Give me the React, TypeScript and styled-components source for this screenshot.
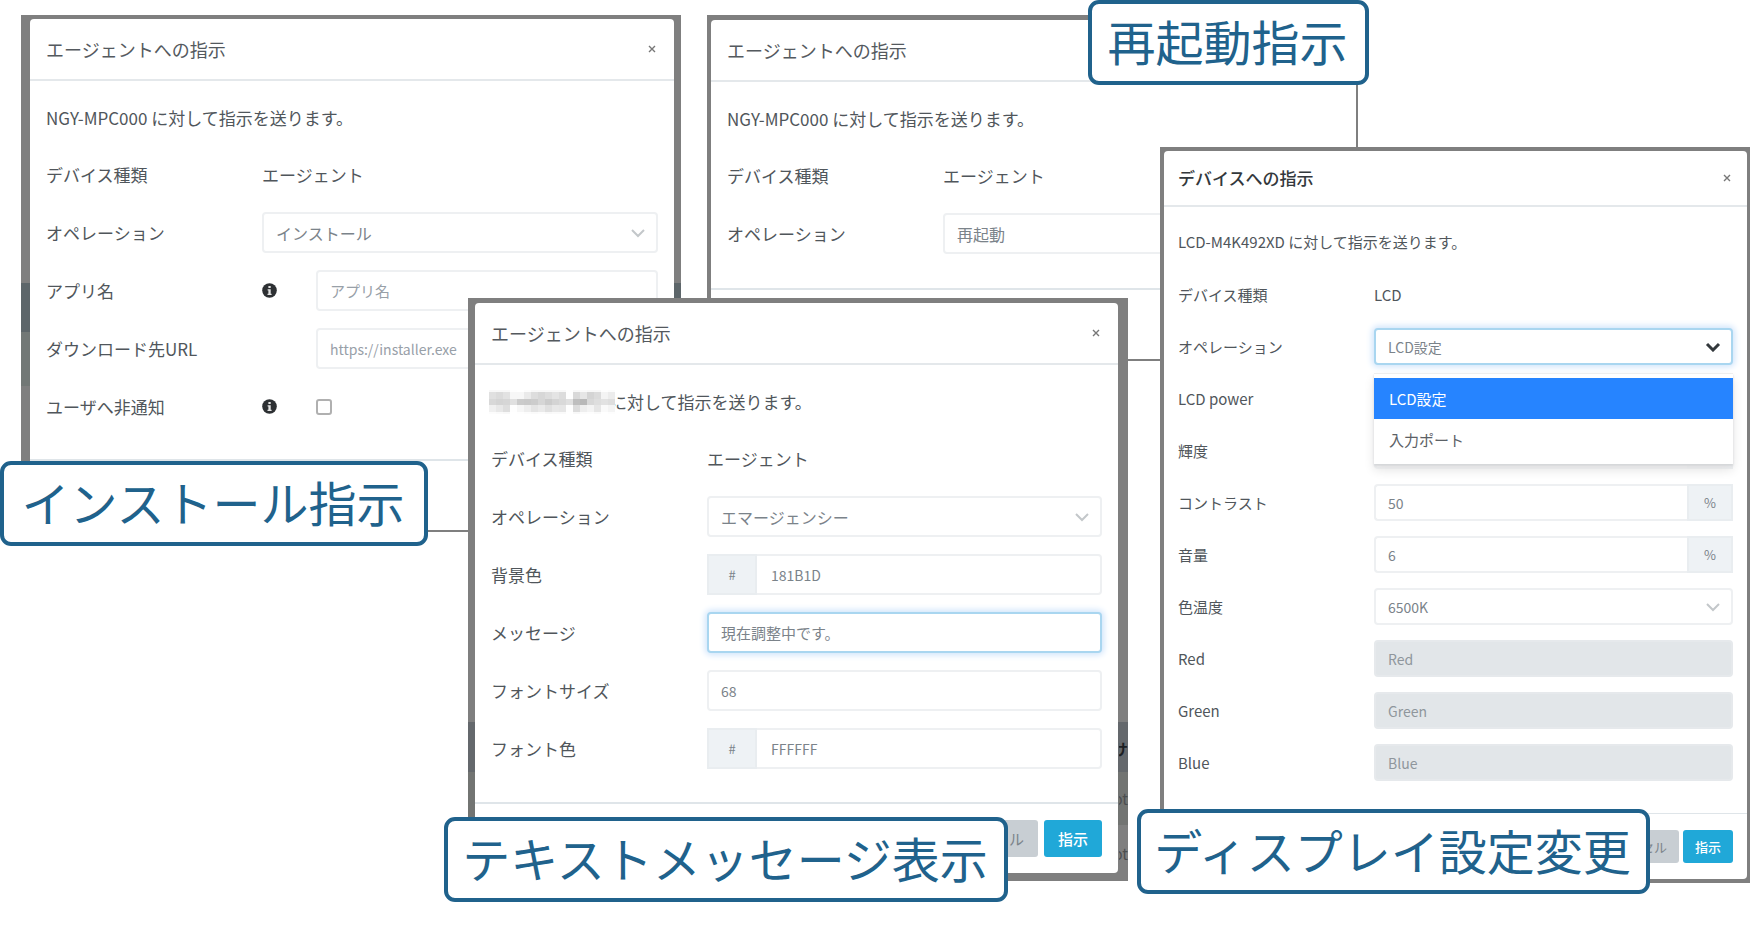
import React, { useId } from "react";
import styled, { createGlobalStyle, css } from "styled-components";

const GlobalStyle = createGlobalStyle`
  *, *::before, *::after { box-sizing: border-box; }
  body {
    margin: 0;
    background: #fff;
    color: #50565b;
    font-family: "Noto Sans CJK JP", "Noto Sans", sans-serif;
  }
  button, input, select { font-family: inherit; }
`;

/* Horizontal places on the board are shares of its 1750 unit wide design grid. */
const share = (units: number) => `calc(100% * ${units} / 1750)`;

type Size = "normal" | "small";

const Board = styled.main`
  position: relative;
  min-width: 1400px;
  min-height: 100vh;
  overflow: hidden;
`;

const Frame = styled.section<{
  $x: number;
  $y: number;
  $w: number;
  $edges: string;
  $backdrop?: string;
}>`
  position: absolute;
  left: ${(p) => share(p.$x)};
  top: ${(p) => p.$y}px;
  width: ${(p) => share(p.$w)};
  padding: ${(p) => p.$edges};
  background: ${(p) => p.$backdrop ?? "#7f7f7f"};
`;

const Dialog = styled.div`
  background: #fff;
  border-radius: 4px;
`;

const Header = styled.header<{ $size: Size }>`
  display: flex;
  align-items: center;
  justify-content: space-between;
  height: ${(p) => (p.$size === "small" ? 56 : 62)}px;
  padding: 0 ${(p) => (p.$size === "small" ? 14 : 16)}px;
  border-bottom: 2px solid #e4e8eb;
`;

const Title = styled.h2<{ $strong?: boolean }>`
  margin: 0;
  font-size: ${(p) => (p.$strong ? 17 : 18)}px;
  font-weight: ${(p) => (p.$strong ? 500 : 400)};
  color: ${(p) => (p.$strong ? "#33383c" : "#54595e")};
  line-height: 24px;
`;

const Close = styled.button`
  display: flex;
  padding: 2px;
  border: 0;
  background: none;
  color: #777;
`;

const Body = styled.div<{ $size: Size; $bottom: number }>`
  display: flex;
  flex-direction: column;
  gap: ${(p) => (p.$size === "small" ? 15 : 17)}px;
  padding: ${(p) => (p.$size === "small" ? "23px 14px" : "25px 16px")};
  padding-bottom: ${(p) => p.$bottom}px;
  font-size: ${(p) => (p.$size === "small" ? 15 : 17)}px;
  --label: ${(p) => (p.$size === "small" ? 196 : 216)}px;
  --control: ${(p) => (p.$size === "small" ? 37 : 41)}px;
`;

const Intro = styled.p`
  display: flex;
  align-items: center;
  margin: 0 0 7px;
  line-height: 24px;
`;

const Row = styled.div`
  display: grid;
  grid-template-columns: var(--label) 1fr;
  align-items: center;
  height: var(--control);
`;

const HintedControl = styled.div`
  display: grid;
  grid-template-columns: 54px 1fr;
  align-items: center;
`;

const field = css`
  width: 100%;
  min-width: 0;
  height: var(--control);
  padding: 0 12px;
  border: 2px solid #eef0f2;
  border-radius: 4px;
  background: #fff;
  color: #7b838a;
  outline: none;
  &::placeholder { color: #98a0a8; opacity: 1; }
`;

const focusRing = css`
  border-color: #a9d6f0;
  box-shadow: 0 0 6px 2px #cfe4fb;
`;

const Input = styled.input<{ $active?: boolean; $text?: number }>`
  ${field}
  font-size: ${(p) => p.$text ?? 14}px;
  ${(p) => p.$active && focusRing}
  &:disabled {
    background: #e2e6e9;
    border-color: #e6e9ec;
  }
  &:disabled::placeholder { color: #8f969c; }
`;

const Group = styled.div`
  display: flex;
  ${Input} { flex: 1; }
  ${Input}:first-child { border-radius: 4px 0 0 4px; border-right: 0; }
  ${Input}:last-child { border-radius: 0 4px 4px 0; border-left: 0; padding-left: 14px; }
`;

const Addon = styled.span<{ $width: number }>`
  display: flex;
  align-items: center;
  justify-content: center;
  width: ${(p) => p.$width}px;
  height: var(--control);
  border: 2px solid #e9edf0;
  background: #eef2f5;
  color: #7b838a;
  font-size: 13px;
`;

const SelectBox = styled.div`
  position: relative;
`;

const NativeSelect = styled.select<{ $active?: boolean; $text: number }>`
  ${field}
  appearance: none;
  font-size: ${(p) => p.$text}px;
  ${(p) => p.$active && focusRing}
`;

const Arrow = styled.svg<{ $active?: boolean }>`
  position: absolute;
  right: 12px;
  top: 50%;
  width: 16px;
  height: 10px;
  margin-top: -5px;
  fill: none;
  stroke: ${(p) => (p.$active ? "#33383c" : "#c3c7ca")};
  stroke-width: ${(p) => (p.$active ? 3 : 2)};
  pointer-events: none;
`;

const Menu = styled.ul`
  position: absolute;
  z-index: 1;
  top: 100%;
  left: 0;
  right: 0;
  margin: 8px 0 0;
  padding: 4px 0;
  list-style: none;
  background: #fff;
  border-top: 1px solid #eee;
  box-shadow: 0 2px 2px #d5d7d9, 0 6px 10px #e4e4e4;
`;

const Option = styled.li<{ $selected?: boolean }>`
  padding: 0 15px;
  font-size: 15px;
  line-height: 41px;
  background: ${(p) => (p.$selected ? "#2684ff" : "#fff")};
  color: ${(p) => (p.$selected ? "#fff" : "#5c6166")};
`;

const Checkbox = styled.input`
  appearance: none;
  width: 16px;
  height: 16px;
  margin: 0;
  border: 2px solid #b0b0b0;
  border-radius: 3px;
  background: #fff;
`;

const Footer = styled.footer<{ $size: Size }>`
  display: flex;
  justify-content: flex-end;
  gap: ${(p) => (p.$size === "small" ? 4 : 6)}px;
  min-height: ${(p) => (p.$size === "small" ? 66 : 71)}px;
  padding: 16px ${(p) => (p.$size === "small" ? 14 : 16)}px;
  border-top: ${(p) => (p.$size === "small" ? 1 : 2)}px solid #dfe5e9;
`;

const Button = styled.button<{ $primary?: boolean; $size: Size }>`
  height: ${(p) => (p.$size === "small" ? 33 : 37)}px;
  padding: 0 ${(p) => (p.$size === "small" ? 12 : 14)}px;
  border: 0;
  border-radius: 3px;
  font-size: ${(p) => (p.$size === "small" ? 13 : 15)}px;
  font-weight: ${(p) => (p.$primary ? 500 : 400)};
  background: ${(p) => (p.$primary ? "#20a8d8" : "#c8ced3")};
  color: ${(p) => (p.$primary ? "#fff" : "#7b838a")};
`;

const Caption = styled.div<{ $x: number; $y: number; $w: number }>`
  position: absolute;
  left: ${(p) => share(p.$x)};
  top: ${(p) => p.$y}px;
  min-width: ${(p) => share(p.$w)};
  padding: 1px 2px 5px 0;
  border: 4px solid #20628c;
  border-radius: 11px;
  background: #fff;
  color: #20628c;
  font-size: 48px;
  line-height: 71px;
  text-align: center;
  white-space: nowrap;
`;

const Behind = styled.span<{ $y: number; $strong?: boolean }>`
  position: absolute;
  right: 0;
  top: ${(p) => p.$y}px;
  width: 9px;
  overflow: hidden;
  display: flex;
  justify-content: flex-end;
  font-size: 15px;
  line-height: 20px;
  font-weight: ${(p) => (p.$strong ? 700 : 400)};
  color: ${(p) => (p.$strong ? "#1d2023" : "#4c4e50")};
`;

const MosaicImage = styled.svg`
  flex: none;
  margin: 0 -5px 0 -2px;
  z-index: 1;
`;

const InfoIcon = () => (
  <svg width="15" height="15" viewBox="0 0 15 15" role="img" aria-label="info">
    <circle cx="7.5" cy="7.5" r="7.3" fill="#2d3033" />
    <path d="M6.4 3h2.3v2H6.4zM5.6 6.2h3.1v4.5h.9V12H5.5v-1.3h.9V7.5h-.8z" fill="#e4e4e4" />
  </svg>
);

const CloseButton = () => (
  <Close type="button" aria-label="close">
    <svg width="8" height="8" viewBox="0 0 8 8" fill="none" stroke="currentColor" strokeWidth="1.4">
      <path d="M1 1l6 6M7 1L1 7" />
    </svg>
  </Close>
);

/* Grey levels of the pixelated device name: one list per band, one value per 7px cell. */
const mosaicBands = [
  { y: 0, height: 2, tones: [248, 248, 248, 254, 255, 252, 248, 248, 248, 248, 248, 254, 248, 250, 248, 248, 254, 252] },
  { y: 2, height: 7, tones: [224, 219, 226, 247, 247, 234, 221, 215, 221, 228, 220, 254, 217, 230, 212, 219, 244, 236] },
  { y: 9, height: 6, tones: [216, 212, 214, 224, 203, 201, 204, 214, 204, 212, 217, 224, 190, 184, 216, 222, 226, 222] },
  { y: 15, height: 7, tones: [240, 232, 222, 254, 246, 238, 228, 234, 224, 232, 230, 254, 220, 238, 244, 230, 250, 244] },
  { y: 22, height: 2, tones: [252, 250, 248, 255, 254, 252, 250, 252, 248, 250, 250, 255, 248, 252, 253, 250, 255, 253] },
];

const Mosaic = () => (
  <MosaicImage width="126" height="24" viewBox="0 0 126 24" shapeRendering="crispEdges" aria-hidden="true">
    {mosaicBands.map((band) =>
      band.tones.map((tone, i) => (
        <rect
          key={`${band.y}-${i}`}
          x={i * 7}
          y={band.y}
          width="7"
          height={band.height}
          fill={`rgb(${tone},${tone},${tone})`}
        />
      )),
    )}
  </MosaicImage>
);

interface FieldProps {
  label: string;
  children: (id: string) => React.ReactNode;
}

const Field = ({ label, children }: FieldProps) => {
  const id = useId();
  return (
    <Row>
      <label htmlFor={id}>{label}</label>
      {children(id)}
    </Row>
  );
};

const Info = ({ label, value }: { label: string; value: string }) => (
  <Row>
    <span>{label}</span>
    <span>{value}</span>
  </Row>
);

interface SelectProps {
  id: string;
  value: string;
  text?: number;
  active?: boolean;
  children?: React.ReactNode;
}

const Select = ({ id, value, text = 16, active, children }: SelectProps) => (
  <SelectBox>
    <NativeSelect id={id} $text={text} $active={active} defaultValue={value}>
      <option>{value}</option>
    </NativeSelect>
    <Arrow viewBox="0 0 16 10" $active={active}>
      <path d="M2 2l6 6 6-6" />
    </Arrow>
    {children}
  </SelectBox>
);

const HexInput = ({ id, value }: { id: string; value: string }) => (
  <Group>
    <Addon $width={50}>#</Addon>
    <Input id={id} defaultValue={value} />
  </Group>
);

const PercentInput = ({ id, value }: { id: string; value?: string }) => (
  <Group>
    <Input id={id} defaultValue={value} />
    <Addon $width={46}>%</Addon>
  </Group>
);

const Actions = ({ size }: { size: Size }) => (
  <Footer $size={size}>
    <Button type="button" $size={size}>キャンセル</Button>
    <Button type="button" $size={size} $primary>指示</Button>
  </Footer>
);

const installBackdrop =
  "linear-gradient(#7f7f7f 268px, #5d666a 268px 317px, #727876 317px 371px, #7f7f7f 371px)";
const messageBackdrop =
  "linear-gradient(#7f7f7f 424px, #64686c 424px 474px, #727472 474px 527px, #7f7f7f 527px)";

export default function App() {
  return (
    <>
      <GlobalStyle />
      <Board>
        <Frame $x={21} $y={15} $w={660} $edges="4px 7px 2px 9px" $backdrop={installBackdrop}>
          <Dialog>
            <Header $size="normal">
              <Title>エージェントへの指示</Title>
              <CloseButton />
            </Header>
            <Body $size="normal" $bottom={32}>
              <Intro>NGY-MPC000 に対して指示を送ります。</Intro>
              <Info label="デバイス種類" value="エージェント" />
              <Field label="オペレーション">{(id) => <Select id={id} value="インストール" />}</Field>
              <Field label="アプリ名">
                {(id) => (
                  <HintedControl>
                    <InfoIcon />
                    <Input id={id} $text={15} placeholder="アプリ名" />
                  </HintedControl>
                )}
              </Field>
              <Field label="ダウンロード先URL">
                {(id) => (
                  <HintedControl>
                    <span />
                    <Input id={id} placeholder="https://installer.exe" />
                  </HintedControl>
                )}
              </Field>
              <Field label="ユーザへ非通知">
                {(id) => (
                  <HintedControl>
                    <InfoIcon />
                    <Checkbox id={id} type="checkbox" />
                  </HintedControl>
                )}
              </Field>
            </Body>
            <Footer $size="normal" />
          </Dialog>
        </Frame>

        <Frame $x={707} $y={15} $w={651} $edges="5px 2px 2px 4px">
          <Dialog>
            <Header $size="normal">
              <Title>エージェントへの指示</Title>
            </Header>
            <Body $size="normal" $bottom={34}>
              <Intro>NGY-MPC000 に対して指示を送ります。</Intro>
              <Info label="デバイス種類" value="エージェント" />
              <Field label="オペレーション">{(id) => <Select id={id} value="再起動" />}</Field>
            </Body>
            <Footer $size="normal" />
          </Dialog>
        </Frame>

        <Frame $x={468} $y={298} $w={660} $edges="5px 10px 8px 7px" $backdrop={messageBackdrop}>
          <Behind $y={441} $strong>サ</Behind>
          <Behind $y={491}>ot</Behind>
          <Behind $y={546}>ot</Behind>
          <Dialog>
            <Header $size="normal">
              <Title>エージェントへの指示</Title>
              <CloseButton />
            </Header>
            <Body $size="normal" $bottom={33}>
              <Intro>
                <Mosaic />
                に対して指示を送ります。
              </Intro>
              <Info label="デバイス種類" value="エージェント" />
              <Field label="オペレーション">{(id) => <Select id={id} value="エマージェンシー" />}</Field>
              <Field label="背景色">{(id) => <HexInput id={id} value="181B1D" />}</Field>
              <Field label="メッセージ">{(id) => <Input id={id} $active $text={15} defaultValue="現在調整中です。" />}</Field>
              <Field label="フォントサイズ">{(id) => <Input id={id} defaultValue="68" />}</Field>
              <Field label="フォント色">{(id) => <HexInput id={id} value="FFFFFF" />}</Field>
            </Body>
            <Actions size="normal" />
          </Dialog>
        </Frame>

        <Frame $x={1160} $y={147} $w={590} $edges="4px 3px 4px 4px">
          <Dialog>
            <Header $size="small">
              <Title $strong>デバイスへの指示</Title>
              <CloseButton />
            </Header>
            <Body $size="small" $bottom={32}>
              <Intro>LCD-M4K492XD に対して指示を送ります。</Intro>
              <Info label="デバイス種類" value="LCD" />
              <Field label="オペレーション">
                {(id) => (
                  <Select id={id} value="LCD設定" text={14} active>
                    <Menu role="listbox" aria-label="オペレーション">
                      <Option role="option" aria-selected $selected>LCD設定</Option>
                      <Option role="option" aria-selected={false}>入力ポート</Option>
                    </Menu>
                  </Select>
                )}
              </Field>
              <Row>
                <span>LCD power</span>
              </Row>
              <Field label="輝度">{(id) => <PercentInput id={id} />}</Field>
              <Field label="コントラスト">{(id) => <PercentInput id={id} value="50" />}</Field>
              <Field label="音量">{(id) => <PercentInput id={id} value="6" />}</Field>
              <Field label="色温度">{(id) => <Select id={id} value="6500K" text={14} />}</Field>
              <Field label="Red">{(id) => <Input id={id} placeholder="Red" disabled />}</Field>
              <Field label="Green">{(id) => <Input id={id} placeholder="Green" disabled />}</Field>
              <Field label="Blue">{(id) => <Input id={id} placeholder="Blue" disabled />}</Field>
            </Body>
            <Actions size="small" />
          </Dialog>
        </Frame>

        <Caption $x={0} $y={461} $w={428}>インストール指示</Caption>
        <Caption $x={1088} $y={0} $w={281}>再起動指示</Caption>
        <Caption $x={444} $y={817} $w={564}>テキストメッセージ表示</Caption>
        <Caption $x={1137} $y={809} $w={513}>ディスプレイ設定変更</Caption>
      </Board>
    </>
  );
}
